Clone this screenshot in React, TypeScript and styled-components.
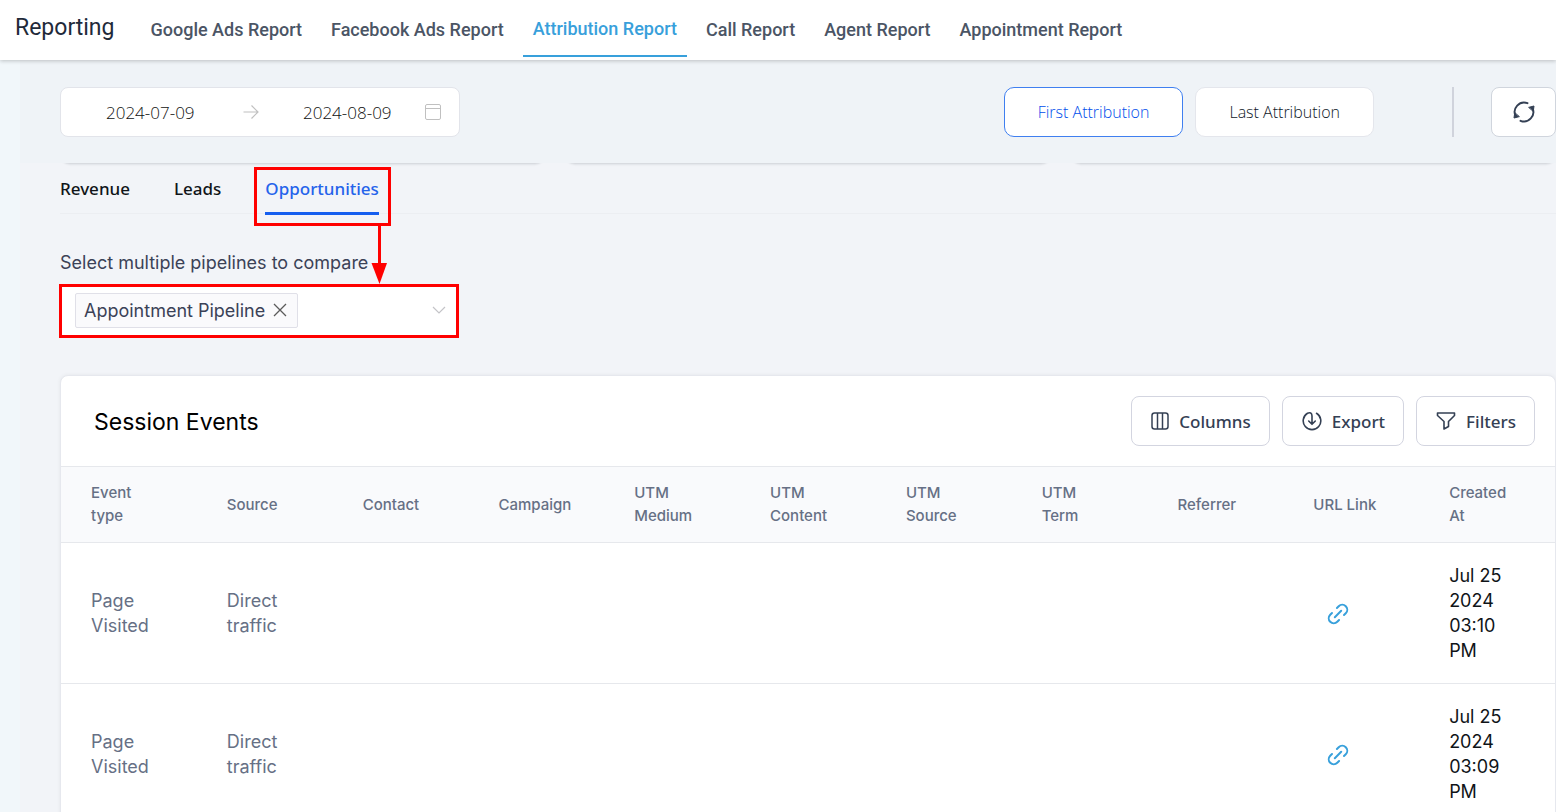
import React, { useState } from "react";
import styled, { createGlobalStyle, css } from "styled-components";

const sans = '"Open Sans", "Noto Sans", sans-serif';
const inter = 'Inter, "Liberation Sans", sans-serif';
const roboto = 'Roboto, "Liberation Sans", sans-serif';

const GlobalStyle = createGlobalStyle`
  *, *::before, *::after { box-sizing: border-box; }
  html { overflow: hidden; }
  body { margin: 0; background: #f2f4f8; font-family: ${inter}; color: #101828; }
  button, input { font: inherit; color: inherit; }
  button { cursor: pointer; }
  a { text-decoration: none; color: inherit; }
`;

const Header = styled.header`
  position: relative;
  display: flex;
  align-items: center;
  gap: 26px;
  height: 60px;
  padding-left: 15px;
  background: #ffffff;
  box-shadow: 0 1px 4px rgba(0, 0, 0, 0.22);
  font-family: ${roboto};
  white-space: nowrap;
`;

const Brand = styled.h1`
  margin: 0;
  padding-bottom: 4px;
  font-size: 23px;
  font-weight: 400;
  line-height: 30px;
  color: #1f2a3a;
`;

const Nav = styled.nav`
  display: flex;
  align-self: stretch;
  gap: 9px;
  padding-bottom: 3px;
`;

const NavLink = styled.a<{ $active?: boolean }>`
  display: flex;
  align-items: center;
  padding: 2px 10px 0;
  font-size: 18px;
  font-weight: 500;
  color: ${(p) => (p.$active ? "#38a0db" : "#4b5565")};
  ${(p) => p.$active && css`border-bottom: 2px solid #38a0db;`}
`;

const Body = styled.div`
  min-height: calc(100vh - 60px);
  padding-left: 20px;
  background: #f1f7fa;
`;

const Main = styled.main`
  min-height: calc(100vh - 60px);
  background: #f2f4f8;
`;

const Toolbar = styled.div`
  display: flex;
  align-items: center;
  height: 103px;
  padding: 1px 0 0 40px;
  background: #eff3f7;
`;

const DateRange = styled.div`
  display: flex;
  align-items: center;
  justify-content: space-between;
  width: 400px;
  height: 50px;
  margin-right: auto;
  padding: 0 18px 0 45px;
  border: 1px solid #e2e4ea;
  border-radius: 8px;
  background: #ffffff;
  color: #c0c0c0;
`;

const DateFields = styled.div`
  display: flex;
  align-items: center;
  gap: 44px;
`;

const DateInput = styled.input`
  width: 93px;
  padding: 0;
  border: 0;
  outline: 0;
  background: transparent;
  font-family: ${sans};
  font-size: 17px;
  font-weight: 300;
  color: #111111;
`;

const ModeGroup = styled.div`
  display: flex;
  gap: 12px;
`;

const ModeButton = styled.button<{ $active?: boolean }>`
  height: 50px;
  padding: 0 33px;
  border: 1px solid ${(p) => (p.$active ? "#3f7ff0" : "#e4e6ec")};
  border-radius: 10px;
  background: #ffffff;
  font-family: ${sans};
  font-size: 16px;
  font-weight: 300;
  color: ${(p) => (p.$active ? "#004eeb" : "#101828")};
`;

const Divider = styled.span`
  width: 2px;
  height: 50px;
  margin: 0 37px 0 78px;
  background: #d0d3dc;
`;

const RefreshButton = styled.button`
  display: grid;
  place-items: center;
  width: 65px;
  height: 50px;
  padding: 0;
  border: 1px solid #d0d5dd;
  border-radius: 8px;
  background: #ffffff;
  color: #344054;
`;

const SummaryRow = styled.div`
  display: grid;
  grid-template-columns: repeat(3, 1fr);
  gap: 20px;
  height: 4px;
  padding-left: 40px;
  overflow: hidden;
`;

const SummaryCard = styled.div`
  height: 32px;
  margin-top: -31px;
  border-bottom: 1px solid #d8dbe0;
  border-radius: 10px;
  background: #ffffff;
  box-shadow: 0 1px 2px rgba(16, 24, 40, 0.08);
`;

const Content = styled.div`
  padding-left: 40px;
`;

const Tabs = styled.div`
  position: relative;
  display: flex;
  gap: 44px;
  height: 47px;
  border-bottom: 1px solid #eceef2;
`;

const Tab = styled.button<{ $active?: boolean }>`
  position: relative;
  height: 48px;
  padding: 0 0 2px;
  border: 0;
  border-bottom: 3px solid ${(p) => (p.$active ? "#155eef" : "transparent")};
  background: transparent;
  font-family: "Noto Sans", sans-serif;
  font-size: 17px;
  font-weight: 500;
  color: ${(p) => (p.$active ? "#2563eb" : "#101418")};
`;

const TabCallout = styled.div`
  position: absolute;
  inset: 0 -12px -14px -11px;
  border: 3px solid #ff0000;
  pointer-events: none;
`;

const CalloutArrow = styled.svg`
  position: absolute;
  top: 100%;
  right: 1px;
`;

const PipelineField = styled.div`
  display: flex;
  flex-direction: column;
  gap: 8px;
  width: 399px;
  padding-top: 36px;
`;

const PipelineLabel = styled.label`
  font-size: 18px;
  line-height: 26px;
  color: #3b4257;
`;

const PipelineSelect = styled.div`
  display: flex;
  align-items: center;
  height: 54px;
  margin-left: -1px;
  padding: 0 10px 2px 13px;
  border: 3px solid #ff0000;
  background: #ffffff;
  color: #c4c4c8;
`;

const Tag = styled.span`
  display: flex;
  align-items: center;
  gap: 8px;
  height: 35px;
  padding: 0 10px 0 8px;
  border: 1px solid #e0e0e8;
  border-radius: 2px;
  background: #fafafc;
  font-size: 18px;
  color: #3b4257;
  white-space: nowrap;
`;

const IconButton = styled.button`
  display: grid;
  place-items: center;
  padding: 0;
  border: 0;
  background: transparent;
  color: #5b5b5b;
`;

const PipelineInput = styled.input`
  flex: 1;
  min-width: 0;
  border: 0;
  outline: 0;
  background: transparent;
`;

const Panel = styled.section`
  margin-top: 37px;
  border: 1px solid #e6e8ee;
  border-radius: 8px;
  background: #ffffff;
  box-shadow: 0 0 4px rgba(16, 24, 40, 0.06);
  overflow: hidden;
`;

const PanelHeader = styled.div`
  display: flex;
  align-items: center;
  gap: 12px;
  height: 90px;
  padding: 0 20px 0 33px;
`;

const PanelTitle = styled.h2`
  margin: 0 auto 0 0;
  padding-top: 2px;
  font-size: 23px;
  font-weight: 400;
  line-height: 30px;
  color: #000000;
`;

const ActionButton = styled.button`
  display: flex;
  align-items: center;
  gap: 10px;
  height: 50px;
  padding: 0 18px 0 19px;
  border: 1px solid #d3d5e0;
  border-radius: 8px;
  background: #ffffff;
  font-family: "Noto Sans", sans-serif;
  font-size: 17px;
  font-weight: 500;
  color: #344054;
`;

const Table = styled.table`
  width: 100%;
  table-layout: fixed;
  border-collapse: separate;
  border-spacing: 0;
`;

const Th = styled.th`
  height: 77px;
  padding: 0 0 1px 30px;
  border: solid #e6e8ec;
  border-width: 1px 0;
  background: #f9fafc;
  font-size: 15px;
  font-weight: 500;
  line-height: 23px;
  text-align: left;
  color: #667085;
  white-space: nowrap;
`;

const Td = styled.td<{ $strong?: boolean }>`
  padding: 20px 0 20px 30px;
  border-bottom: 1px solid #e6e8ec;
  font-size: 18px;
  line-height: 25px;
  color: ${(p) => (p.$strong ? "#101418" : "#667085")};
`;

const Line = styled.span`
  display: block;
  white-space: nowrap;
`;

const UrlLink = styled.a`
  display: inline-flex;
  margin-left: 13px;
  vertical-align: middle;
  color: #38a0db;
`;

const ArrowIcon = () => (
  <svg width="16" height="16" viewBox="0 0 16 16" fill="none" stroke="currentColor" strokeWidth="1.2" aria-hidden="true">
    <path d="M0.5 8h14.5M8.5 1.5 15 8l-6.500 6.500" />
  </svg>
);

const CalendarIcon = () => (
  <svg width="16" height="16" viewBox="0 0 16 16" fill="none" stroke="currentColor" aria-hidden="true">
    <rect x="0.500" y="0.500" width="15" height="15" rx="1.500" />
    <path d="M0.500 4.500h15" />
  </svg>
);

const RefreshIcon = () => (
  <svg width="22" height="22" viewBox="0 0 22 22" fill="none" stroke="currentColor" strokeWidth="1.900" strokeLinecap="round" strokeLinejoin="round" aria-hidden="true">
    <path d="M14.500 2.200A9.400 9.400 0 0 0 2.600 15M7.500 19.800A9.400 9.400 0 0 0 19.400 7" />
    <path d="M16 6.300 21 5l-0.700 5zM6 15.700 1 17l0.700-5z" fill="currentColor" strokeWidth="1" />
  </svg>
);

const ColumnsIcon = () => (
  <svg width="18" height="18" viewBox="0 0 18 18" fill="none" stroke="currentColor" strokeWidth="1.500" aria-hidden="true">
    <rect x="1" y="1" width="16" height="16" rx="2.500" />
    <path d="M6.500 1v16M11.500 1v16" />
  </svg>
);

const ExportIcon = () => (
  <svg width="20" height="20" viewBox="0 0 20 20" fill="none" stroke="currentColor" strokeWidth="1.600" strokeLinecap="round" strokeLinejoin="round" aria-hidden="true">
    <path d="M14.500 2.300A8.800 8.800 0 1 1 5.500 2.300C8 1 10 2 10 5v8M6.700 10 10 13.300 13.300 10" />
  </svg>
);

const FilterIcon = () => (
  <svg width="20" height="18" viewBox="0 0 20 18" fill="none" stroke="currentColor" strokeWidth="1.600" strokeLinecap="round" strokeLinejoin="round" aria-hidden="true">
    <path d="M1.500 1h17v2.500L12.500 9.500v5L8 17V9.500L1.500 3.500z" />
  </svg>
);

const CloseIcon = () => (
  <svg width="14" height="14" viewBox="0 0 14 14" fill="none" stroke="currentColor" strokeWidth="1.300" aria-hidden="true">
    <path d="M1 1l12 12M13 1 1 13" />
  </svg>
);

const ChevronIcon = () => (
  <svg width="14" height="8" viewBox="0 0 14 8" fill="none" stroke="#c4c4c8" strokeWidth="1.200" aria-hidden="true">
    <path d="M1 1l6 6 6-6" />
  </svg>
);

const LinkIcon = () => (
  <svg width="24" height="24" viewBox="0 0 24 24" fill="none" stroke="currentColor" strokeWidth="2" strokeLinecap="round" strokeLinejoin="round" aria-hidden="true">
    <g transform="rotate(-45 12 12)">
      <path d="M8.500 17H6A5 5 0 0 1 6 7h2.500M15.500 7H18a5 5 0 0 1 0 10h-2.500M7.500 12h9" />
    </g>
  </svg>
);

const reports = [
  "Google Ads Report",
  "Facebook Ads Report",
  "Attribution Report",
  "Call Report",
  "Agent Report",
  "Appointment Report",
];

const tabs = ["Revenue", "Leads", "Opportunities"];

const columns = [
  ["Event", "type"],
  ["Source"],
  ["Contact"],
  ["Campaign"],
  ["UTM", "Medium"],
  ["UTM", "Content"],
  ["UTM", "Source"],
  ["UTM", "Term"],
  ["Referrer"],
  ["URL Link"],
  ["Created", "At"],
];

const events = [
  { type: ["Page", "Visited"], source: ["Direct", "traffic"], created: ["Jul 25", "2024", "03:10", "PM"] },
  { type: ["Page", "Visited"], source: ["Direct", "traffic"], created: ["Jul 25", "2024", "03:09", "PM"] },
];

const Lines = ({ of }: { of: string[] }) => (
  <>
    {of.map((text) => (
      <Line key={text}>{text}</Line>
    ))}
  </>
);

export default function App() {
  const [tab, setTab] = useState("Opportunities");
  const [mode, setMode] = useState("First Attribution");

  return (
    <>
      <GlobalStyle />
      <Header>
        <Brand>Reporting</Brand>
        <Nav>
          {reports.map((name) => (
            <NavLink key={name} href="#" $active={name === "Attribution Report"}>
              {name}
            </NavLink>
          ))}
        </Nav>
      </Header>
      <Body>
        <Main>
          <Toolbar>
            <DateRange>
              <DateFields>
                <DateInput aria-label="Start date" defaultValue="2024-07-09" />
                <ArrowIcon />
                <DateInput aria-label="End date" defaultValue="2024-08-09" />
              </DateFields>
              <CalendarIcon />
            </DateRange>
            <ModeGroup>
              {["First Attribution", "Last Attribution"].map((name) => (
                <ModeButton key={name} $active={mode === name} onClick={() => setMode(name)}>
                  {name}
                </ModeButton>
              ))}
            </ModeGroup>
            <Divider />
            <RefreshButton aria-label="Refresh">
              <RefreshIcon />
            </RefreshButton>
          </Toolbar>
          <SummaryRow>
            <SummaryCard />
            <SummaryCard />
            <SummaryCard />
          </SummaryRow>
          <Content>
            <Tabs role="tablist">
              {tabs.map((name) => (
                <Tab key={name} role="tab" aria-selected={tab === name} $active={tab === name} onClick={() => setTab(name)}>
                  {name}
                  {name === "Opportunities" && (
                    <TabCallout>
                      <CalloutArrow width="16" height="61" viewBox="0 0 16 61" aria-hidden="true">
                        <path d="M8.500 0v42" stroke="#ff0000" strokeWidth="3" />
                        <path d="M0.500 40h15.500L8.500 61z" fill="#ff0000" />
                      </CalloutArrow>
                    </TabCallout>
                  )}
                </Tab>
              ))}
            </Tabs>
            <PipelineField>
              <PipelineLabel htmlFor="pipelines">Select multiple pipelines to compare</PipelineLabel>
              <PipelineSelect>
                <Tag>
                  Appointment Pipeline
                  <IconButton aria-label="Remove Appointment Pipeline">
                    <CloseIcon />
                  </IconButton>
                </Tag>
                <PipelineInput id="pipelines" role="combobox" aria-expanded="false" />
                <IconButton aria-label="Show pipelines">
                  <ChevronIcon />
                </IconButton>
              </PipelineSelect>
            </PipelineField>
            <Panel>
              <PanelHeader>
                <PanelTitle>Session Events</PanelTitle>
                <ActionButton>
                  <ColumnsIcon />
                  Columns
                </ActionButton>
                <ActionButton>
                  <ExportIcon />
                  Export
                </ActionButton>
                <ActionButton>
                  <FilterIcon />
                  Filters
                </ActionButton>
              </PanelHeader>
              <Table>
                <thead>
                  <tr>
                    {columns.map((lines) => (
                      <Th key={lines.join(" ")} scope="col">
                        <Lines of={lines} />
                      </Th>
                    ))}
                  </tr>
                </thead>
                <tbody>
                  {events.map((event) => (
                    <tr key={event.created.join(" ")}>
                      <Td><Lines of={event.type} /></Td>
                      <Td><Lines of={event.source} /></Td>
                      <Td /><Td /><Td /><Td /><Td /><Td /><Td />
                      <Td>
                        <UrlLink href="#" aria-label="Open page URL">
                          <LinkIcon />
                        </UrlLink>
                      </Td>
                      <Td $strong><Lines of={event.created} /></Td>
                    </tr>
                  ))}
                </tbody>
              </Table>
            </Panel>
          </Content>
        </Main>
      </Body>
    </>
  );
}
